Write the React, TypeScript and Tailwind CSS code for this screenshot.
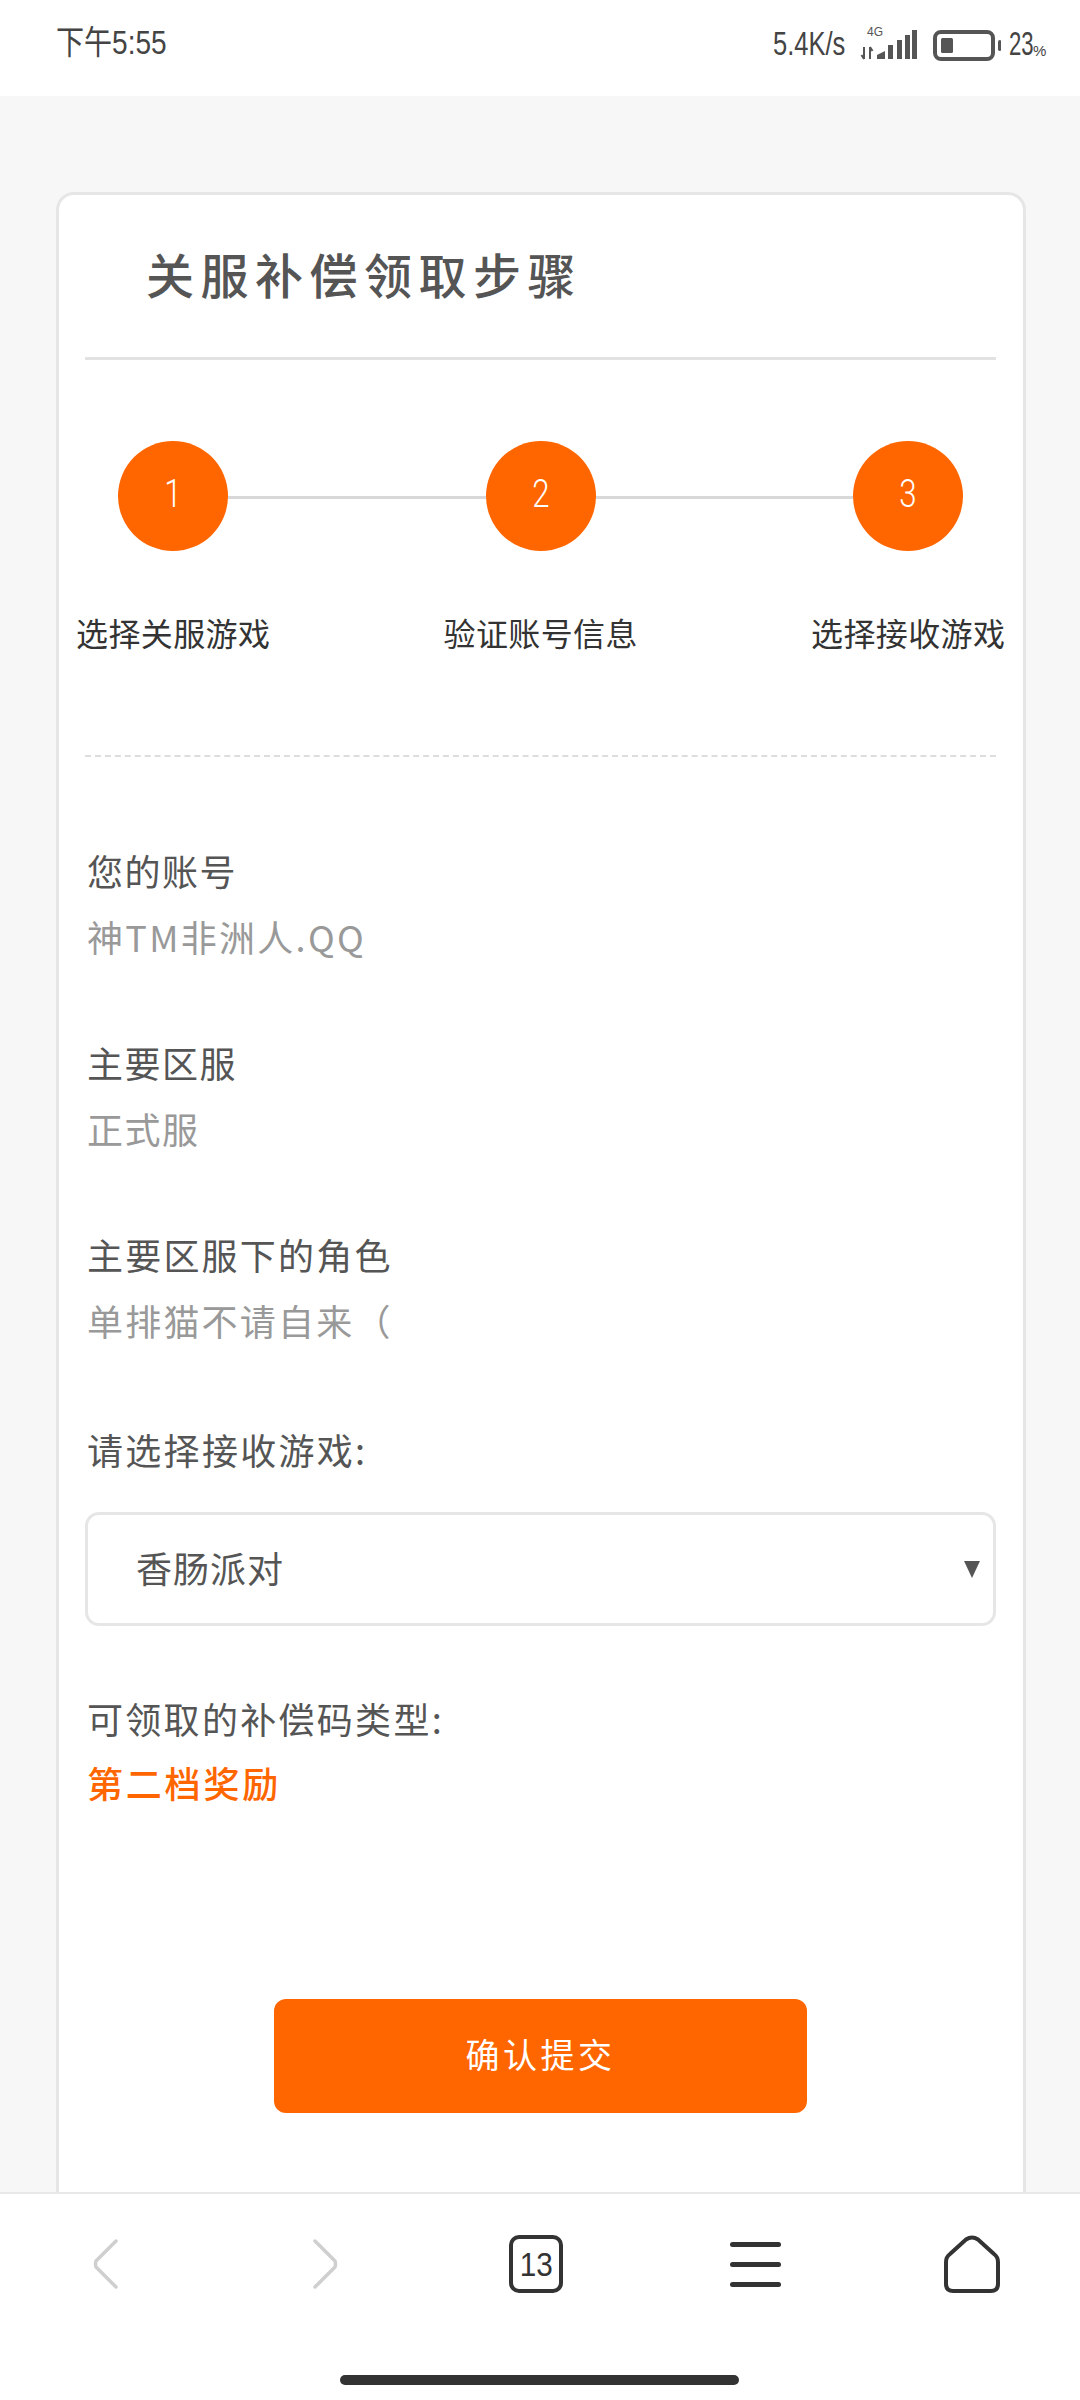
const cjk = "font-['Noto_Sans_CJK_SC','Noto_Sans',sans-serif]";
const sans = "font-['Liberation_Sans','Noto_Sans_CJK_SC',sans-serif]";

const fields = [
  { label: "您的账号", value: "神TM非洲人.QQ", spacing: "tracking-[1.5px]", valueSpacing: "tracking-[2.3px]" },
  { label: "主要区服", value: "正式服", spacing: "tracking-[1.5px]", valueSpacing: "tracking-[1.5px]" },
  { label: "主要区服下的角色", value: "单排猫不请自来（", spacing: "tracking-[2.2px]", valueSpacing: "tracking-[2.2px]" },
];

const steps = ["选择关服游戏", "验证账号信息", "选择接收游戏"];

function StatusBar() {
  return (
    <div className="h-24 shrink-0 bg-white flex items-start justify-between pl-14 pr-[34px] pt-[25px] text-[#444]">
      <span className={`text-[33px] leading-[36px] whitespace-nowrap origin-left scale-x-[0.85] ${sans}`}>下午5:55</span>
      <div className="flex items-start">
        <div className="w-[72px] mr-[15px]">
          <span className={`block text-[34px] leading-[36px] whitespace-nowrap origin-left scale-x-[0.75] ${sans}`}>5.4K/s</span>
        </div>
        <svg width="58" height="40" viewBox="0 0 58 40" className="mr-[15px]">
          <text x="7" y="11" fontSize="12" fill="#555" fontFamily="Liberation Sans">4G</text>
          <path d="M4 22v12M1.5 30l2.5 4M10 34V22M10 22l2.5 4" stroke="#555" strokeWidth="2" fill="none" />
          <path d="M17 34v-4l8-4v8zM28 34V20h5v14zM37 34V15h5v19zM45 34V10h5v24zM52 34V5h5v29z" fill="#555" />
        </svg>
        <svg width="68" height="32" viewBox="0 0 68 32" className="mr-[8px] mt-[5px]">
          <rect x="2" y="2" width="58" height="27" rx="6" fill="none" stroke="#555" strokeWidth="4" />
          <rect x="8" y="8" width="12" height="15" rx="1.5" fill="#555" />
          <rect x="65" y="10" width="3.5" height="11" rx="1.75" fill="#555" />
        </svg>
        <div className="w-[24px]">
          <span className={`block text-[34px] leading-[36px] origin-left scale-x-[0.65] ${sans}`}>23</span>
        </div>
        <span className={`w-[13px] text-[15px] leading-[16px] mt-[18px] ${sans}`}>%</span>
      </div>
    </div>
  );
}

function Steps() {
  return (
    <div>
      <div className="flex items-center mt-[81px] px-[33px]">
        <Circle n="1" />
        <div className="flex-1 h-[3px] bg-[#d8d8d8] mt-[2px]" />
        <Circle n="2" />
        <div className="flex-1 h-[3px] bg-[#d8d8d8] mt-[2px]" />
        <Circle n="3" />
      </div>
      <div className="flex justify-between -mx-[9px] mt-[61px]">
        {steps.map((s) => (
          <span key={s} className="w-[194px] text-center text-[32px] leading-[40px] tracking-[0.4px] whitespace-nowrap text-[#333]">
            {s}
          </span>
        ))}
      </div>
    </div>
  );
}

function Circle({ n }: { n: string }) {
  return (
    <div className="w-[110px] h-[110px] rounded-full bg-[#ff6600] shrink-0 flex items-center justify-center text-white">
      <span className="text-[39px] leading-none mb-[4px] font-light font-['Roboto',sans-serif] scale-x-[0.8]">{n}</span>
    </div>
  );
}

export default function App() {
  return (
    <div className={`w-[1080px] h-[2400px] flex flex-col overflow-hidden bg-[#f7f7f7] ${cjk}`}>
      <StatusBar />
      <main className="flex-1 min-h-0 overflow-hidden pl-14 pr-[54px] pt-24">
        <div className="bg-white border-[3px] border-[#e6e6e6] rounded-[18px] pl-[26px] pr-[27px] h-[2100px]">
          <div className="h-[165px] border-b-[3px] border-[#e2e2e2] flex items-center pl-[61px] pb-[6px]">
            <h1 className="text-[48px] tracking-[6.5px] text-[#555] font-medium">关服补偿领取步骤</h1>
          </div>
          <Steps />
          <div className="mt-[103px] border-t-2 border-dashed border-[#dddddd]" />

          <div className="mt-[91px] pl-[2px] flex flex-col gap-[82px]">
            {fields.map((f) => (
              <div key={f.label}>
                <div className={`text-[36px] leading-[44px] text-[#555] ${f.spacing}`}>{f.label}</div>
                <div className={`text-[36px] leading-[44px] mt-[22px] text-[#999] ${f.valueSpacing}`}>{f.value}</div>
              </div>
            ))}
          </div>

          <div className="mt-[85px] pl-[2px] text-[36px] leading-[44px] tracking-[2.3px] text-[#555]">请选择接收游戏:</div>
          <div className="mt-[41px] h-[114px] border-[3px] border-[#e6e6e6] rounded-[14px] flex items-center justify-between pl-12 pr-[13px]">
            <span className="text-[36px] tracking-[1px] text-[#555] mb-[5px]">香肠派对</span>
            <svg width="16" height="18" viewBox="0 0 16 18">
              <path d="M0 1h16L8 18z" fill="#555" />
            </svg>
          </div>

          <div className="mt-[70px] pl-[2px] text-[36px] leading-[44px] tracking-[2.3px] text-[#555]">可领取的补偿码类型:</div>
          <div className="mt-[20px] pl-[2px] text-[36px] leading-[44px] tracking-[2.8px] text-[#ff6600] font-medium">第二档奖励</div>

          <div className="flex justify-center mt-[195px]">
            <button className="w-[533px] h-[114px] pb-[6px] rounded-[12px] bg-[#ff6600] text-white text-[34px] tracking-[3.5px]">确认提交</button>
          </div>
        </div>
      </main>
      <BottomBar />
    </div>
  );
}

function BottomBar() {
  return (
    <div className="relative h-[208px] shrink-0 bg-white border-t-[2px] border-[#e8e8e8]">
      <div className="h-[146px] flex items-center pb-[6px]">
        <div className="flex-1 flex justify-center pr-[8px]">
          <svg width="30" height="50" viewBox="0 0 30 50" fill="none" stroke="#cfcfcf" strokeWidth="3.5" strokeLinecap="round" strokeLinejoin="round">
            <path d="M25 2L5 22q-1 3 0 6l20 20" />
          </svg>
        </div>
        <div className="flex-1 flex justify-center">
          <svg width="30" height="50" viewBox="0 0 30 50" fill="none" stroke="#cfcfcf" strokeWidth="3.5" strokeLinecap="round" strokeLinejoin="round">
            <path d="M5 2l20 20q1 3 0 6L5 48" />
          </svg>
        </div>
        <div className="flex-1 flex justify-center pr-[8px]">
          <div className="w-[54px] h-[58px] border-[4px] border-[#333] rounded-[10px] flex items-center justify-center text-[#333]">
            <span className={`text-[33px] leading-none scale-x-90 ${sans}`}>13</span>
          </div>
        </div>
        <div className="flex-1 flex justify-center pr-[6px]">
          <div className="w-[51px] flex flex-col gap-[15px]">
            <div className="h-[5px] rounded-full bg-[#333]" />
            <div className="h-[5px] rounded-full bg-[#333]" />
            <div className="h-[5px] rounded-full bg-[#333]" />
          </div>
        </div>
        <div className="flex-1 flex justify-center pr-[2px]">
          <svg width="56" height="58" viewBox="0 0 56 58" fill="none" stroke="#333" strokeWidth="4" strokeLinejoin="round">
            <path d="M22 4.5q6-4 12 0L50 19q4 3 4 8v22q0 7-7 7H9q-7 0-7-7V27q0-5 4-8z" />
          </svg>
        </div>
      </div>
      <div className="absolute left-[340px] top-[181px] w-[399px] h-[10px] rounded-full bg-[#333]" />
    </div>
  );
}
